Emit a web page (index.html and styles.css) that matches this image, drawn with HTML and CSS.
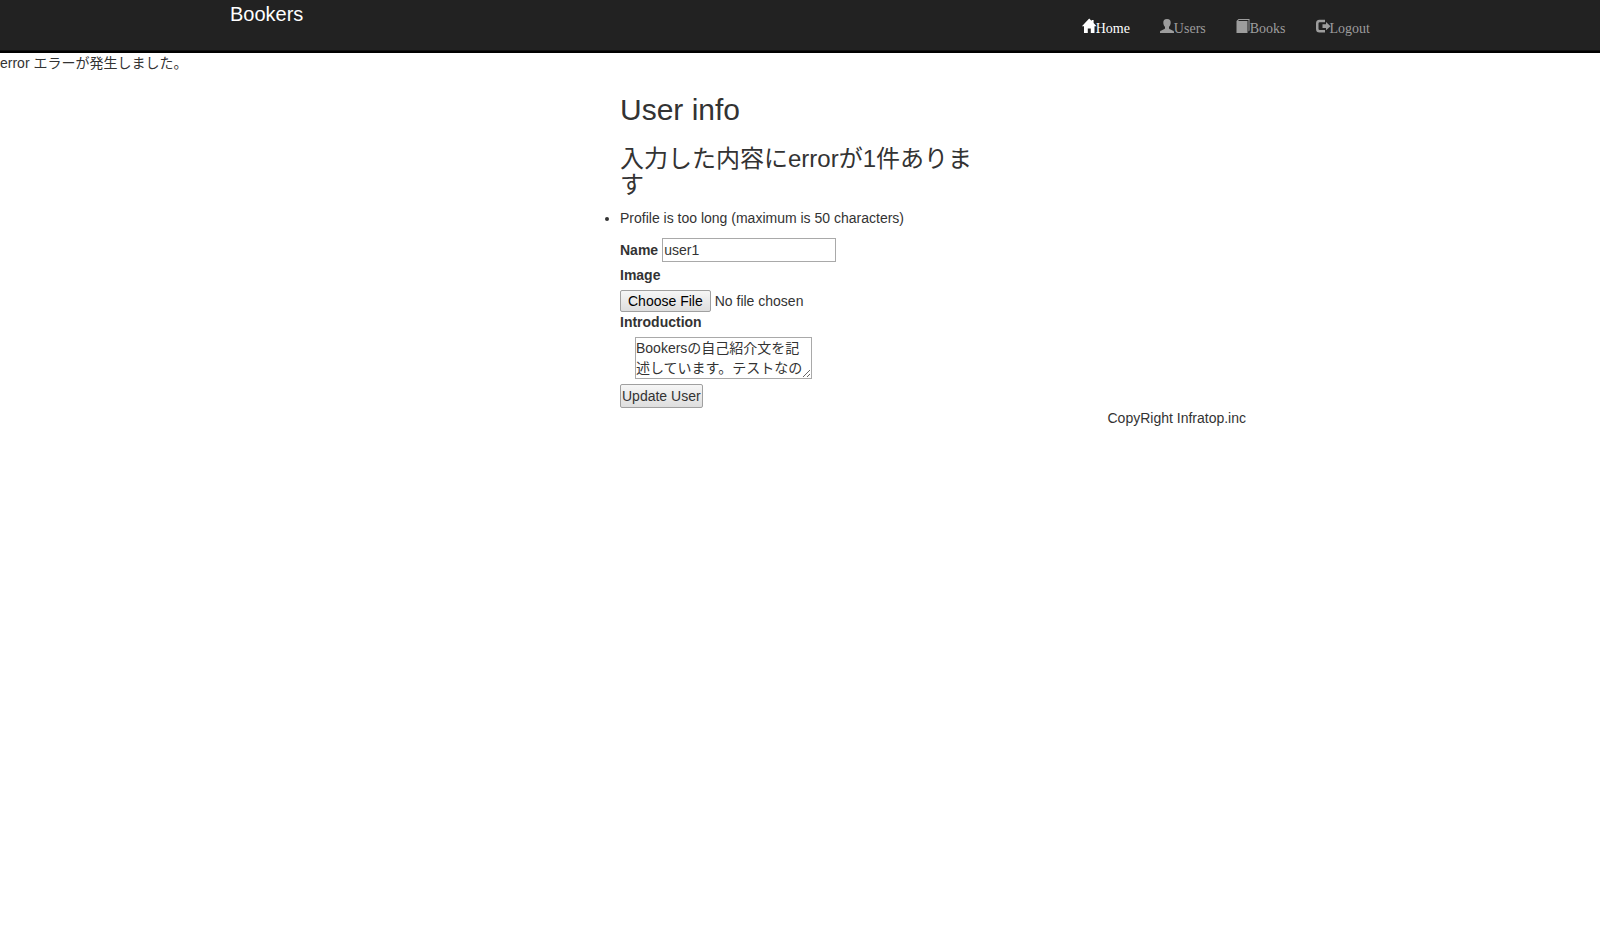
FILE: index.html
```html
<!DOCTYPE html>
<html lang="ja">
<head>
<meta charset="utf-8">
<title>Bookers</title>
<link rel="stylesheet" href="styles.css">
</head>
<body>
<header class="navbar">
  <div class="container navbar-inner">
    <a class="brand" href="#">Bookers</a>
    <nav>
      <ul class="nav">
        <li><a class="nav-link active" href="#"><svg class="icon" viewBox="0 0 14 14" aria-hidden="true"><path d="M7.200-.4 9.600 2V1H11.600V4L14.600 7.200H12.500V14H8.800V9.600H5.800V14H2V7.200H-.1Z"/></svg>Home</a></li>
        <li><a class="nav-link" href="#"><svg class="icon" viewBox="0 0 14 14" aria-hidden="true"><path d="M7 0C9.800 0 10.800 1.600 10.700 4 10.600 6 9.600 7.200 9 8V9.600C9.200 10.600 14 11.400 14 13V14H0V13C0 11.400 4.800 10.600 5 9.600V8C4.400 7.200 3.400 6 3.300 4 3.200 1.600 4.200 0 7 0Z"/></svg>Users</a></li>
        <li><a class="nav-link" href="#"><svg class="icon" viewBox="0 0 14 14" aria-hidden="true"><path d="M2.500 0H13.500V11.500L12.500 12.500V1H3L2 2H11.500V14H.5V2Z"/></svg>Books</a></li>
        <li><a class="nav-link" href="#"><svg class="icon" viewBox="0 0 14 14" aria-hidden="true"><path d="M9 .8H3.500A3.500 3.500 0 0 0 0 4.300V10A3.500 3.500 0 0 0 3.500 13.500H9V11H3.800A1.300 1.300 0 0 1 2.500 9.700V4.600A1.300 1.300 0 0 1 3.800 3.300H9ZM10 3 14.500 7.200 10 11.300V9H6.500V5.300H10Z"/></svg>Logout</a></li>
      </ul>
    </nav>
  </div>
</header>
<p class="notice">error エラーが発生しました。</p>
<main class="container grid">
  <section class="user-info">
    <h2>User info</h2>
    <h3>入力した内容にerrorが1件あります</h3>
    <ul class="errors">
      <li>Profile is too long (maximum is 50 characters)</li>
    </ul>
    <form class="user-form">
      <div class="name-row">
        <label for="name">Name</label>
        <input class="text-input" id="name" type="text" value="user1">
      </div>
      <label for="image">Image</label>
      <input class="file-input" id="image" type="file">
      <label for="introduction">Introduction</label>
      <textarea class="introduction" id="introduction" rows="2">Bookersの自己紹介文を記述しています。テストなので</textarea>
      <button class="submit" type="submit">Update User</button>
    </form>
  </section>
</main>
<footer class="container grid">
  <p class="copyright">CopyRight Infratop.inc</p>
</footer>
</body>
</html>
```
FILE: styles.css
```css
* {
  box-sizing: border-box;
}

body {
  margin: 0;
  color: #333;
  background: #fff;
  font: 14px/20px "Liberation Sans", "Noto Sans CJK JP", sans-serif;
}

.container {
  width: 100%;
  max-width: 1170px;
  margin: 0 auto;
}

.grid {
  display: grid;
  grid-template-columns: repeat(12, 1fr);
}

.navbar {
  padding-bottom: 1px;
  background: #222;
  border-bottom: 2px solid #000;
  box-shadow: inset 0 -1px #101010;
}

.navbar-inner {
  display: flex;
  justify-content: space-between;
  align-items: flex-start;
  padding-left: 15px;
}

.brand {
  color: #fff;
  font-size: 20px;
  line-height: 28px;
  text-decoration: none;
}

.nav {
  display: flex;
  margin: 0;
  padding: 0;
  list-style: none;
}

.nav-link {
  display: flex;
  align-items: center;
  padding: 19px 15px 11px;
  color: #9d9d9d;
  font-family: "Liberation Serif", serif;
  line-height: 20px;
  text-decoration: none;
}

.nav-link.active {
  color: #fff;
}

.icon {
  width: 14px;
  height: 14px;
  margin-bottom: 6px;
  fill: currentColor;
  overflow: visible;
}

.notice {
  margin: 0;
}

.user-info {
  grid-column: 5 / span 4;
  padding: 0 15px;
}

h2,
h3 {
  margin: 20px 0 10px;
  font-weight: 400;
}

h2 {
  font-size: 30px;
  line-height: 33px;
}

h3 {
  font-size: 24px;
  line-height: 26px;
}

.errors {
  margin: 0 0 10px;
  padding: 0;
}

.user-form {
  display: flex;
  flex-direction: column;
  align-items: flex-start;
}

label {
  margin-bottom: 5px;
  font-weight: 700;
}

input,
textarea,
button {
  margin: 0;
  color: inherit;
  font: inherit;
}

.name-row {
  display: flex;
  align-items: center;
  gap: 4px;
  margin-bottom: 3px;
}

.name-row label {
  margin: 0;
}

.text-input {
  width: 174px;
  height: 24px;
  padding: 1px;
  border: 1px solid #a9a9a9;
}

.file-input {
  height: 22px;
  line-height: 22px;
}

.file-input::file-selector-button {
  height: 22px;
  margin: 0 4px 0 0;
  padding: 0 7px;
  color: #000;
  font: inherit;
  line-height: 20px;
  background: linear-gradient(#f6f6f6, #dedede);
  border: 1px solid #a0a0a0;
  border-radius: 2px;
}

.introduction {
  width: 177px;
  height: 42px;
  margin: 0 0 5px 15px;
  padding: 0;
  border: 1px solid #a9a9a9;
  overflow: hidden;
}

.submit {
  height: 24px;
  padding: 1px;
  background: linear-gradient(#f6f6f6, #dedede);
  border: 1px solid #a0a0a0;
  border-radius: 2px;
}

.copyright {
  grid-column: 10 / span 3;
  margin: 0;
  padding: 0 15px;
}
```
